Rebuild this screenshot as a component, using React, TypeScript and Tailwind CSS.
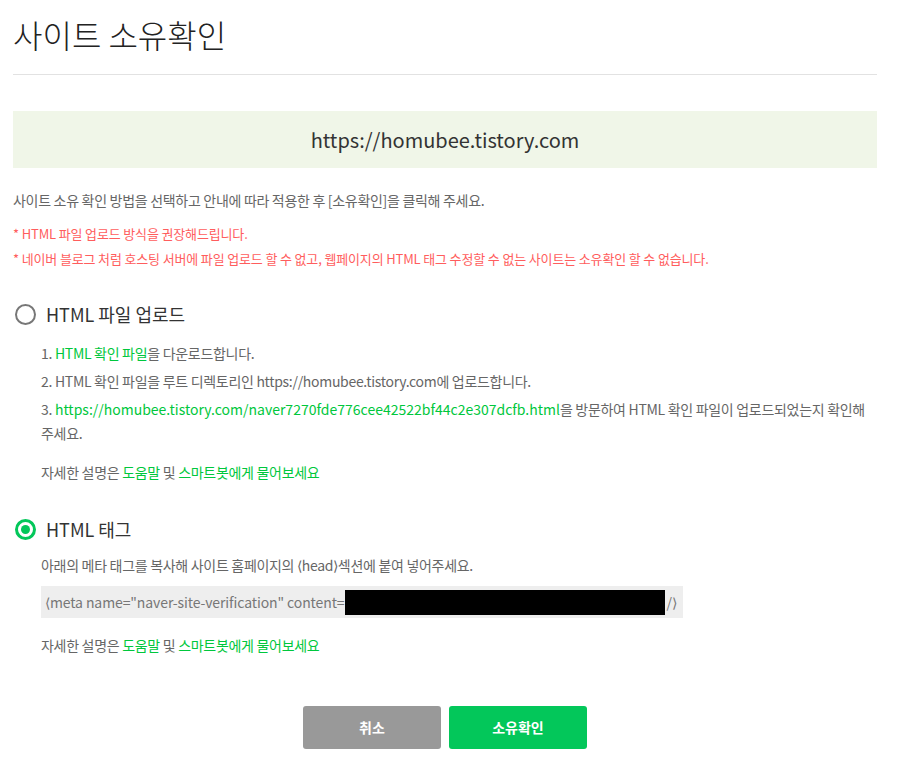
import React from 'react';

const font = { fontFamily: '"Noto Sans CJK KR", "Noto Sans", sans-serif' };

const Radio = ({ checked }: { checked?: boolean }) =>
  checked ? (
    <span className="w-[21px] h-[21px] rounded-full border-[3px] border-[#03c75a] flex items-center justify-center bg-white">
      <span className="w-[9px] h-[9px] rounded-full bg-[#03c75a]" />
    </span>
  ) : (
    <span className="w-[21px] h-[21px] rounded-full border-2 border-[#777] bg-white" />
  );

const Help = () => (
  <p className="text-[14px] text-[#666] leading-[20px] tracking-[-0.3px]">
    자세한 설명은 <span className="text-[#00c73c]">도움말</span> 및{' '}
    <span className="text-[#00c73c]">스마트봇에게 물어보세요</span>
  </p>
);

export default function App() {
  return (
    <div className="bg-white w-[904px] h-[766px] px-[13px] pt-[12px]" style={font}>
      {/* Title */}
      <h1 className="text-[32px] font-light text-[#222] leading-[44px]">사이트 소유확인</h1>
      <div className="mt-[18px] w-[864px] h-px bg-[#e2e2e2]" />

      {/* Site URL */}
      <div className="mt-[36px] w-[864px] h-[57px] bg-[#f0f6e8] flex items-center justify-center text-[20px] text-[#333]">
        https://homubee.tistory.com
      </div>

      <p className="mt-[22px] text-[14px] text-[#666] leading-[20px] tracking-[-0.3px]">
        사이트 소유 확인 방법을 선택하고 안내에 따라 적용한 후 [소유확인]을 클릭해 주세요.
      </p>
      <div className="mt-[14px] flex flex-col gap-[5px] text-[13px] text-[#ff5d5d] leading-[20px] tracking-[-0.15px]">
        <p>* HTML 파일 업로드 방식을 권장해드립니다.</p>
        <p>* 네이버 블로그 처럼 호스팅 서버에 파일 업로드 할 수 없고, 웹페이지의 HTML 태그 수정할 수 없는 사이트는 소유확인 할 수 없습니다.</p>
      </div>

      {/* HTML file upload */}
      <div className="mt-[32px] flex items-center gap-[10px] pl-[2px]">
        <Radio />
        <span className="text-[18px] text-[#333]">HTML 파일 업로드</span>
      </div>
      <div className="pl-[28px] mt-[11px] text-[14px] text-[#666] leading-[28px] tracking-[-0.3px]">
        <p>
          1. <span className="text-[#00c73c]">HTML 확인 파일</span>을 다운로드합니다.
        </p>
        <p>2. HTML 확인 파일을 루트 디렉토리인 https://homubee.tistory.com에 업로드합니다.</p>
        <p className="leading-[24px] pt-[2px] pr-[10px] break-keep">
          3.{' '}
          <span className="text-[#00c73c] tracking-normal">
            https://homubee.tistory.com/naver7270fde776cee42522bf44c2e307dcfb.html
          </span>
          을 방문하여 HTML 확인 파일이 업로드되었는지 확인해 주세요.
        </p>
        <div className="mt-[17px]">
          <Help />
        </div>
      </div>

      {/* HTML tag */}
      <div className="mt-[34px] flex items-center gap-[10px] pl-[2px]">
        <Radio checked />
        <span className="text-[18px] text-[#333]">HTML 태그</span>
      </div>
      <div className="pl-[28px] mt-[12px] text-[14px] text-[#666]">
        <p className="leading-[20px] tracking-[-0.3px]">
          아래의 메타 태그를 복사해 사이트 홈페이지의 ⟨head⟩섹션에 붙여 넣어주세요.
        </p>
        <div className="mt-[11px] w-[642px] h-[32px] bg-[#eeeeee] flex items-center pl-[4px] text-[#777] tracking-[-0.1px] whitespace-nowrap">
          <span>⟨meta name="naver-site-verification" content=</span>
          <span className="w-[320px] h-[25px] bg-black shrink-0" />
          <span className="ml-[2px]">/⟩</span>
        </div>
        <div className="mt-[17px]">
          <Help />
        </div>
      </div>

      {/* Buttons */}
      <div className="mt-[51px] w-[864px] flex justify-center gap-[8px]">
        <button className="w-[138px] h-[43px] rounded-[3px] bg-[#999999] text-white text-[14px] font-bold">
          취소
        </button>
        <button className="w-[138px] h-[43px] rounded-[3px] bg-[#03c75a] text-white text-[14px] font-bold">
          소유확인
        </button>
      </div>
    </div>
  );
}
